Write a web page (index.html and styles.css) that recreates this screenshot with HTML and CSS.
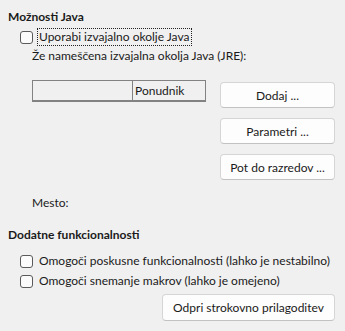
FILE: index.html
```html
<!DOCTYPE html>
<html lang="sl">
<head>
<meta charset="utf-8">
<link rel="stylesheet" href="styles.css">
</head>
<body>
<div class="page">
  <h2 class="title">Možnosti Java</h2>
  <label class="check first">
    <span class="box"></span>
    <span class="focus">Uporabi izvajalno okolje Java</span>
  </label>
  <div class="indent">
    <div class="label-jre">Že nameščena izvajalna okolja Java (JRE):</div>
    <div class="jre">
      <div class="table">
        <div class="head">
          <div class="col1"></div>
          <div class="col2">Ponudnik</div>
        </div>
      </div>
      <div class="buttons">
        <button class="btn">Dodaj ...</button>
        <button class="btn">Parametri ...</button>
        <button class="btn">Pot do razredov ...</button>
      </div>
    </div>
    <div class="mesto">Mesto:</div>
  </div>
  <h2 class="title second">Dodatne funkcionalnosti</h2>
  <label class="check gap-top">
    <span class="box"></span>
    <span>Omogoči poskusne funkcionalnosti (lahko je nestabilno)</span>
  </label>
  <label class="check">
    <span class="box"></span>
    <span>Omogoči snemanje makrov (lahko je omejeno)</span>
  </label>
  <div class="footer">
    <button class="btn wide">Odpri strokovno prilagoditev</button>
  </div>
</div>
</body>
</html>
```
FILE: styles.css
```css
html, body {
  margin: 0;
  padding: 0;
  background: #f0f0f0;
}
body {
  font-family: "Lato", "Open Sans", sans-serif;
  font-size: 12px;
  color: #1a1a1a;
}
.page {
  width: 345px;
  height: 331px;
  padding: 9px 10px 0 8px;
  box-sizing: border-box;
  display: flex;
  flex-direction: column;
}
.title {
  margin: 0;
  font-size: 12px;
  font-weight: bold;
  line-height: 16px;
}
.title.second {
  margin-top: 16px;
}
.check {
  display: flex;
  align-items: center;
  gap: 6px;
  margin-left: 12px;
  height: 20px;
  line-height: 16px;
}
.check.first {
  margin-top: 2px;
}
.check.gap-top {
  margin-top: 8px;
}
.box {
  width: 11px;
  height: 11px;
  border: 1px solid #5a5a5a;
  border-radius: 3px;
  background: #fbfbfb;
  flex: none;
}
.focus {
  outline: 1px dotted #222;
  outline-offset: 0;
  padding: 0 1px;
  margin-left: -1px;
}
.indent {
  margin-left: 24px;
}
.label-jre {
  line-height: 16px;
  margin-top: 1px;
}
.jre {
  display: flex;
  gap: 14px;
  margin-top: 16px;
}
.table {
  width: 174px;
  height: 22px;
  flex: none;
  box-sizing: border-box;
  border: 1px solid #828282;
  border-bottom: 2px solid #828282;
  background: #f0f0f0;
}
.head {
  display: flex;
  height: 100%;
}
.col1 {
  width: 99px;
  border-right: 1px solid #828282;
}
.col2 {
  padding-left: 2px;
  line-height: 19px;
}
.buttons {
  display: flex;
  flex-direction: column;
  gap: 10px;
  margin-top: 2px;
}
.btn {
  font-family: inherit;
  font-size: 12px;
  color: #1a1a1a;
  background: #fdfdfd;
  border: 1px solid #d5d5d5;
  border-bottom-color: #c2c2c2;
  border-radius: 4px;
  width: 115px;
  height: 26px;
  padding: 0;
  box-sizing: border-box;
}
.mesto {
  margin-top: 15px;
  line-height: 16px;
}
.footer {
  display: flex;
  justify-content: flex-end;
  margin-top: 3px;
}
.btn.wide {
  width: 173px;
  height: 27px;
}
```
